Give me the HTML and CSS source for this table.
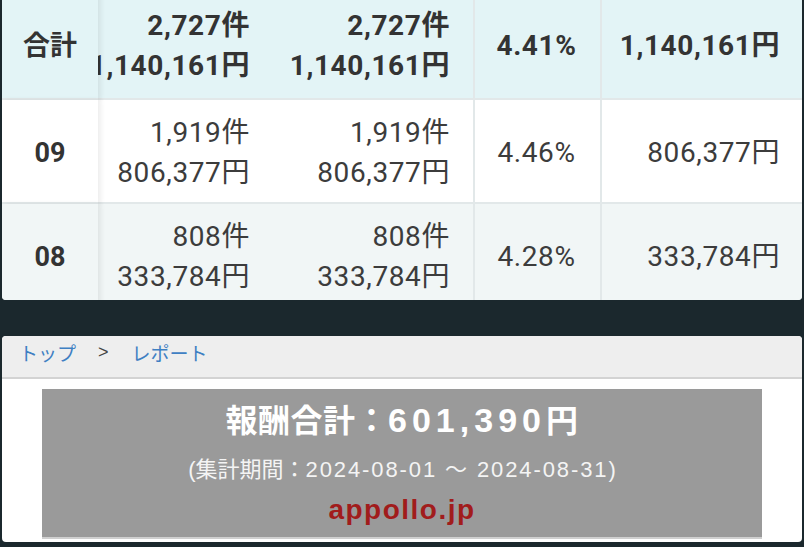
FILE: index.html
```
<!DOCTYPE html>
<html lang="ja">
<head>
<meta charset="utf-8">
<link rel="stylesheet" href="styles.css">
</head>
<body>
<div class="table-card">
  <div class="grid">
    <div class="cell label head">合計</div>
    <div class="cell num head clip"><span>2,727件</span><span>1,140,161円</span></div>
    <div class="cell num head bordered"><span>2,727件</span><span>1,140,161円</span></div>
    <div class="cell rate head bordered">4.41%</div>
    <div class="cell num head single">1,140,161円</div>

    <div class="cell label odd">09</div>
    <div class="cell num odd clip"><span>1,919件</span><span>806,377円</span></div>
    <div class="cell num odd bordered"><span>1,919件</span><span>806,377円</span></div>
    <div class="cell rate odd bordered">4.46%</div>
    <div class="cell num odd single">806,377円</div>

    <div class="cell label even">08</div>
    <div class="cell num even clip"><span>808件</span><span>333,784円</span></div>
    <div class="cell num even bordered"><span>808件</span><span>333,784円</span></div>
    <div class="cell rate even bordered">4.28%</div>
    <div class="cell num even single">333,784円</div>
  </div>
</div>

<div class="report-card">
  <nav class="crumbs">
    <span class="crumb-link">トップ</span>
    <span class="crumb-sep">&gt;</span>
    <span class="crumb-link">レポート</span>
  </nav>
  <div class="report-body">
    <div class="banner">
      <div class="banner-title">報酬合計：<span class="banner-num">601,390</span>円</div>
      <div class="banner-period">(集計期間：<span class="period-num">2024-08-01 ～ 2024-08-31</span>)</div>
      <div class="banner-site">appollo.jp</div>
    </div>
  </div>
</div>
</body>
</html>
```
FILE: styles.css
```
* { box-sizing: border-box; }
html, body { margin: 0; padding: 0; }
body {
  background: #1b282d;
  width: 804px;
  height: 547px;
  overflow: hidden;
  font-family: "Roboto", "Noto Sans CJK JP", sans-serif;
}

.table-card {
  margin: 0 2px;
  height: 300px;
  overflow: hidden;
  border-radius: 0 0 4px 4px;
  background: #f1f6f6;
}

.grid {
  display: grid;
  grid-template-columns: 96px 175px 202px 127px 200px;
  grid-template-rows: 107px 104px 104px;
  margin-top: -7px;
}

.cell {
  display: flex;
  flex-direction: column;
  justify-content: center;
  border-bottom: 2px solid #e2e8e9;
  color: #3c3c3c;
  font-size: 28px;
  line-height: 40px;
  white-space: nowrap;
  letter-spacing: 0.6px;
}

.head { background: #e3f4f6; font-weight: 700; color: #333; }
.odd { background: #ffffff; padding-top: 4px; }
.even { background: #f1f6f6; padding-top: 4px; }

.label {
  align-items: center;
  font-weight: 700;
  font-size: 27px;
  letter-spacing: 0;
  color: #333;
  position: relative;
  z-index: 1;
  box-shadow: 3px 0 5px rgba(0, 0, 0, 0.07);
}

.num {
  align-items: flex-end;
  padding-right: 23px;
}

.clip { overflow: hidden; }

.bordered { border-right: 2px solid #e2e8e9; }

.single { padding-right: 22px; }

.rate {
  align-items: center;
  padding-right: 2px;
}

.report-card {
  margin: 36px 2px 0;
  height: 206px;
  background: #ffffff;
  border-radius: 4px;
  overflow: hidden;
}

.crumbs {
  height: 43px;
  background: #eeeeee;
  border-bottom: 2px solid #d3d3d3;
  display: flex;
  align-items: center;
  padding: 0 0 8px 17px;
  font-family: "Noto Sans CJK JP", sans-serif;
  font-size: 19px;
}

.crumb-link { color: #3f80c3; }
.crumb-sep {
  color: #444;
  font-family: "Liberation Sans", sans-serif;
  font-size: 18px;
  margin: 0 23px 0 22px;
}

.report-body {
  padding: 10px 40px 0;
}

.banner {
  background: #9a9a9a;
  border-bottom: 2px solid #cfcfcf;
  height: 150px;
  padding-top: 11px;
  text-align: center;
  font-family: "Liberation Sans", "Noto Sans CJK JP", sans-serif;
}

.banner-title {
  color: #ffffff;
  font-weight: 700;
  font-size: 32px;
  line-height: 40px;
  letter-spacing: 0.5px;
}

.banner-num { font-size: 34px; letter-spacing: 5px; }

.banner-period {
  margin-top: 14px;
  color: #f4f4f4;
  font-size: 22px;
  line-height: 30px;
}

.period-num { letter-spacing: 1.9px; }

.banner-site {
  margin-top: 8px;
  color: #a11c1c;
  font-weight: 700;
  font-size: 28px;
  line-height: 34px;
  letter-spacing: 1.5px;
}
```
